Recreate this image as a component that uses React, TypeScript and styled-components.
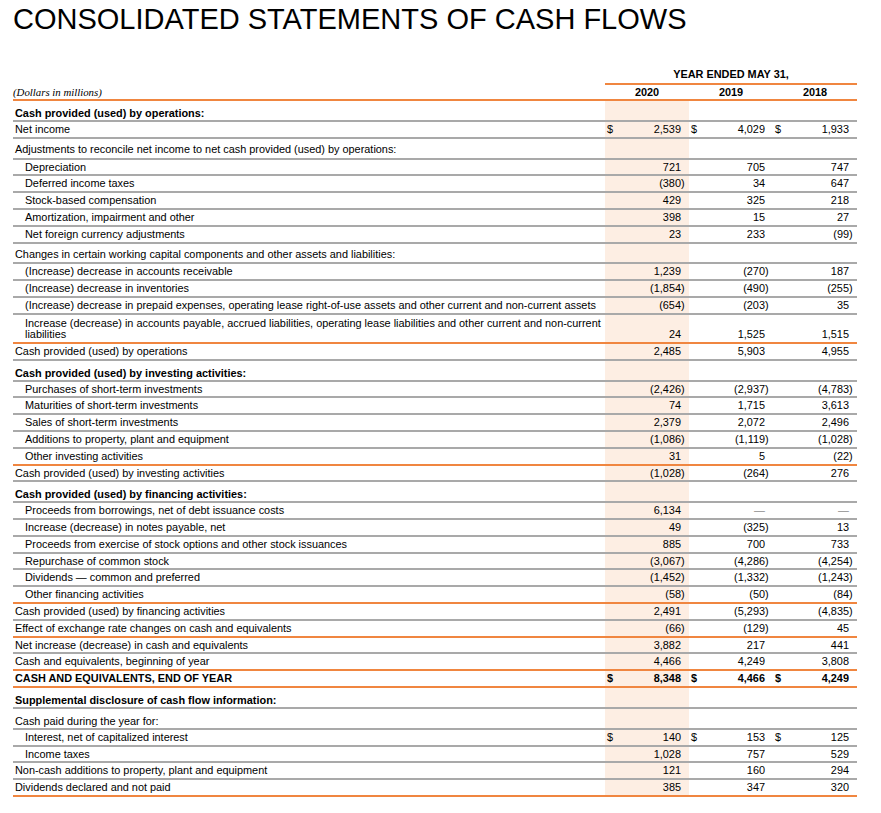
import React from 'react';
import styled, { createGlobalStyle } from 'styled-components';

const GlobalStyle = createGlobalStyle`
  html, body { margin: 0; padding: 0; background: #ffffff; }
  body {
    font-family: "Liberation Sans", Arial, Helvetica, sans-serif;
    color: #000000;
  }
`;

const ORANGE = '#f08640';
const GREY = '#a9a9a9';
const SHADE = '#fdeee3';
const COLS = '592px 84px 84px 84px';

type Kind = 'section' | 'data' | 'double';
type Rule = 'grey' | 'orange';

const ROW_H: Record<Kind, number> = { section: 20.9, data: 16.8, double: 29 };
const LINE_H: Record<Kind, number> = { section: 14, data: 14.8, double: 11 };

const Page = styled.div`
  padding: 2px 0 0 13px;
  width: 844px;
`;

const Title = styled.h1`
  margin: 0;
  font-family: "Liberation Sans", Arial, Helvetica, sans-serif;
  font-weight: 400;
  font-size: 29px;
  line-height: 34px;
  white-space: nowrap;
`;

const Statement = styled.div`
  margin-top: 30px;
  font-size: 10.9px;
`;

const CaptionRow = styled.div`
  display: grid;
  grid-template-columns: ${COLS};
  height: 19px;
  box-sizing: border-box;
`;

const PeriodCaption = styled.div`
  grid-column: 2 / 5;
  text-align: center;
  font-weight: 700;
  line-height: 17px;
  border-bottom: 2px solid ${ORANGE};
`;

const YearRow = styled.div`
  display: grid;
  grid-template-columns: ${COLS};
  height: 16px;
  box-sizing: border-box;
  border-bottom: 2px solid ${ORANGE};
  line-height: 14px;
`;

const Units = styled.div`
  font-family: "Liberation Serif", "Times New Roman", serif;
  font-style: italic;
  font-size: 10.8px;
`;

const Year = styled.div`
  text-align: center;
  font-weight: 700;
`;

const Line = styled.div<{ $kind: Kind; $rule: Rule; $bold: boolean }>`
  display: grid;
  grid-template-columns: ${COLS};
  box-sizing: border-box;
  height: ${(p) => ROW_H[p.$kind]}px;
  border-bottom: 2px solid ${(p) => (p.$rule === 'orange' ? ORANGE : GREY)};
  font-weight: ${(p) => (p.$bold ? 700 : 400)};
`;

const Label = styled.div<{ $kind: Kind; $indent: boolean; $high: boolean }>`
  padding-left: ${(p) => (p.$indent ? 12 : 2)}px;
  padding-top: ${(p) =>
    p.$kind === 'section' ? (p.$high ? 3 : 5) : p.$kind === 'double' ? 3.5 : 0}px;
  line-height: ${(p) => LINE_H[p.$kind]}px;
  white-space: nowrap;
`;

const Amount = styled.div<{ $shade: boolean; $kind: Kind }>`
  background: ${(p) => (p.$shade ? SHADE : 'transparent')};
  display: flex;
  justify-content: space-between;
  align-items: ${(p) => (p.$kind === 'double' ? 'flex-end' : 'flex-start')};
  padding-bottom: ${(p) => (p.$kind === 'double' ? 1.5 : 0)}px;
  line-height: ${(p) => LINE_H[p.$kind]}px;
`;

const Currency = styled.span`
  padding-left: 2px;
`;

const Figure = styled.span`
  margin-left: auto;
  padding-right: 8px;
  white-space: nowrap;
`;

const Close = styled.span`
  display: inline-block;
  width: 0;
  overflow: visible;
`;

const Nil = styled.span`
  color: #8c8c8c;
`;

type RowData = {
  label: string[];
  kind?: Kind;
  indent?: boolean;
  bold?: boolean;
  high?: boolean;
  rule?: Rule;
  dollar?: boolean;
  values?: [string, string, string];
};

const rows: RowData[] = [
  { label: ['Cash provided (used) by operations:'], kind: 'section', bold: true },
  { label: ['Net income'], values: ['2,539', '4,029', '1,933'], dollar: true },
  {
    label: ['Adjustments to reconcile net income to net cash provided (used) by operations:'],
    kind: 'section',
    high: true,
  },
  { label: ['Depreciation'], indent: true, values: ['721', '705', '747'] },
  { label: ['Deferred income taxes'], indent: true, values: ['(380)', '34', '647'] },
  { label: ['Stock-based compensation'], indent: true, values: ['429', '325', '218'] },
  { label: ['Amortization, impairment and other'], indent: true, values: ['398', '15', '27'] },
  { label: ['Net foreign currency adjustments'], indent: true, values: ['23', '233', '(99)'] },
  {
    label: ['Changes in certain working capital components and other assets and liabilities:'],
    kind: 'section',
    high: true,
  },
  { label: ['(Increase) decrease in accounts receivable'], indent: true, values: ['1,239', '(270)', '187'] },
  { label: ['(Increase) decrease in inventories'], indent: true, values: ['(1,854)', '(490)', '(255)'] },
  {
    label: [
      '(Increase) decrease in prepaid expenses, operating lease right-of-use assets and other current and non-current assets',
    ],
    indent: true,
    values: ['(654)', '(203)', '35'],
  },
  {
    label: [
      'Increase (decrease) in accounts payable, accrued liabilities, operating lease liabilities and other current and non-current',
      'liabilities',
    ],
    indent: true,
    kind: 'double',
    rule: 'orange',
    values: ['24', '1,525', '1,515'],
  },
  { label: ['Cash provided (used) by operations'], values: ['2,485', '5,903', '4,955'] },
  { label: ['Cash provided (used) by investing activities:'], kind: 'section', bold: true },
  { label: ['Purchases of short-term investments'], indent: true, values: ['(2,426)', '(2,937)', '(4,783)'] },
  { label: ['Maturities of short-term investments'], indent: true, values: ['74', '1,715', '3,613'] },
  { label: ['Sales of short-term investments'], indent: true, values: ['2,379', '2,072', '2,496'] },
  {
    label: ['Additions to property, plant and equipment'],
    indent: true,
    values: ['(1,086)', '(1,119)', '(1,028)'],
  },
  { label: ['Other investing activities'], indent: true, rule: 'orange', values: ['31', '5', '(22)'] },
  { label: ['Cash provided (used) by investing activities'], values: ['(1,028)', '(264)', '276'] },
  { label: ['Cash provided (used) by financing activities:'], kind: 'section', bold: true },
  {
    label: ['Proceeds from borrowings, net of debt issuance costs'],
    indent: true,
    values: ['6,134', '—', '—'],
  },
  { label: ['Increase (decrease) in notes payable, net'], indent: true, values: ['49', '(325)', '13'] },
  {
    label: ['Proceeds from exercise of stock options and other stock issuances'],
    indent: true,
    values: ['885', '700', '733'],
  },
  { label: ['Repurchase of common stock'], indent: true, values: ['(3,067)', '(4,286)', '(4,254)'] },
  { label: ['Dividends — common and preferred'], indent: true, values: ['(1,452)', '(1,332)', '(1,243)'] },
  { label: ['Other financing activities'], indent: true, rule: 'orange', values: ['(58)', '(50)', '(84)'] },
  { label: ['Cash provided (used) by financing activities'], values: ['2,491', '(5,293)', '(4,835)'] },
  {
    label: ['Effect of exchange rate changes on cash and equivalents'],
    rule: 'orange',
    values: ['(66)', '(129)', '45'],
  },
  { label: ['Net increase (decrease) in cash and equivalents'], values: ['3,882', '217', '441'] },
  { label: ['Cash and equivalents, beginning of year'], rule: 'orange', values: ['4,466', '4,249', '3,808'] },
  {
    label: ['CASH AND EQUIVALENTS, END OF YEAR'],
    bold: true,
    dollar: true,
    rule: 'orange',
    values: ['8,348', '4,466', '4,249'],
  },
  { label: ['Supplemental disclosure of cash flow information:'], kind: 'section', bold: true },
  { label: ['Cash paid during the year for:'], kind: 'section' },
  {
    label: ['Interest, net of capitalized interest'],
    indent: true,
    dollar: true,
    values: ['140', '153', '125'],
  },
  { label: ['Income taxes'], indent: true, values: ['1,028', '757', '529'] },
  { label: ['Non-cash additions to property, plant and equipment'], values: ['121', '160', '294'] },
  { label: ['Dividends declared and not paid'], rule: 'orange', values: ['385', '347', '320'] },
];

function renderFigure(v: string) {
  if (v === '—') return <Nil>—</Nil>;
  if (v.startsWith('(')) {
    return (
      <>
        {v.slice(0, -1)}
        <Close>)</Close>
      </>
    );
  }
  return v;
}

export default function App() {
  return (
    <Page>
      <GlobalStyle />
      <Title>CONSOLIDATED STATEMENTS OF CASH FLOWS</Title>
      <Statement>
        <CaptionRow>
          <PeriodCaption>YEAR ENDED MAY 31,</PeriodCaption>
        </CaptionRow>
        <YearRow>
          <Units>(Dollars in millions)</Units>
          <Year>2020</Year>
          <Year>2019</Year>
          <Year>2018</Year>
        </YearRow>
        {rows.map((r, i) => {
          const kind: Kind = r.kind ?? 'data';
          return (
            <Line key={i} $kind={kind} $rule={r.rule ?? 'grey'} $bold={!!r.bold}>
              <Label $kind={kind} $indent={!!r.indent} $high={!!r.high}>
                {r.label.map((t, j) => (
                  <React.Fragment key={j}>
                    {j > 0 && <br />}
                    {t}
                  </React.Fragment>
                ))}
              </Label>
              {[0, 1, 2].map((c) => (
                <Amount key={c} $shade={c === 0} $kind={kind}>
                  {r.dollar && <Currency>$</Currency>}
                  {r.values && <Figure>{renderFigure(r.values[c])}</Figure>}
                </Amount>
              ))}
            </Line>
          );
        })}
      </Statement>
    </Page>
  );
}
